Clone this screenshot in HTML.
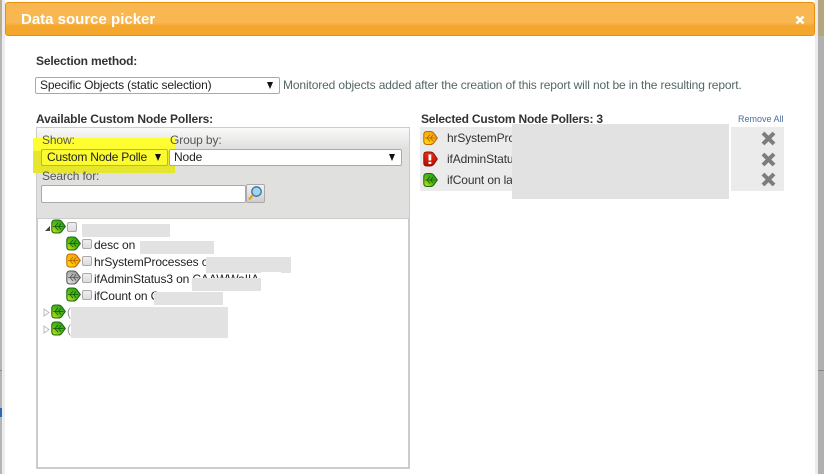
<!DOCTYPE html>
<html><head><meta charset="utf-8">
<style>
html,body{margin:0;padding:0;width:824px;height:474px;overflow:hidden;background:#fff;font-family:"Liberation Sans",sans-serif;font-size:12px;color:#333}
.a{position:absolute;white-space:nowrap}
.b{font-weight:bold;letter-spacing:-.17px}
.sel{position:absolute;box-sizing:border-box;background:#fff;border:1px solid #a9a9a9;border-radius:2px;color:#222;font-size:12px;line-height:14px;padding-left:4px;white-space:nowrap;overflow:hidden;letter-spacing:-.13px}
.arr{position:absolute;width:0;height:0;border-left:3.5px solid transparent;border-right:3.5px solid transparent;border-top:7px solid #111}
.m{position:absolute;background:#e2e2e2}
.t{position:absolute;white-space:nowrap;font-size:12px;line-height:14px;color:#222;letter-spacing:-.13px}
.c{position:absolute;box-sizing:border-box;width:10px;height:10px;background:linear-gradient(#eee,#ddd);border:1px solid #aaa;border-radius:2px}
svg{position:absolute;overflow:visible}
</style></head><body>
<svg width="0" height="0" style="position:absolute"><defs>
<linearGradient id="g" x1="1" y1="0" x2="0" y2="1"><stop offset="0" stop-color="#1f9a1c"/><stop offset=".55" stop-color="#55b814"/><stop offset="1" stop-color="#e0e810"/></linearGradient>
<linearGradient id="y" x1="1" y1="0" x2="0" y2="1"><stop offset="0" stop-color="#f59a14"/><stop offset=".55" stop-color="#fbb80c"/><stop offset="1" stop-color="#ffe800"/></linearGradient>
<linearGradient id="k" x1="1" y1="0" x2="0" y2="1"><stop offset="0" stop-color="#8f8f8f"/><stop offset=".55" stop-color="#b8b8b8"/><stop offset="1" stop-color="#eee"/></linearGradient>
<linearGradient id="r" x1="0" y1="0" x2="0" y2="1"><stop offset="0" stop-color="#e83018"/><stop offset="1" stop-color="#b80c00"/></linearGradient>
<symbol id="lg" viewBox="0 0 15 15" overflow="visible"><path d="M.8 4.500Q.8 1 4 1H7.500Q9.500 1 11 3L14.300 7.500L11 12Q9.500 14 7.500 14H4Q.8 14 .8 10.500Z" fill="url(#g)" stroke="#1d6a12" stroke-width="1.100"/><path d="M2 7.500H12.500M7 4L4 7.500L7 11M10 4.500L7.500 7.500L10 10.500" fill="none" stroke="#0f5a0c" stroke-width=".8"/></symbol>
<symbol id="ly" viewBox="0 0 15 15" overflow="visible"><path d="M.8 4.500Q.8 1 4 1H7.500Q9.500 1 11 3L14.300 7.500L11 12Q9.500 14 7.500 14H4Q.8 14 .8 10.500Z" fill="url(#y)" stroke="#c26a00" stroke-width="1.100"/><path d="M2 7.500H12.500M7 4L4 7.500L7 11M10 4.500L7.500 7.500L10 10.500" fill="none" stroke="#b06000" stroke-width=".8"/></symbol>
<symbol id="lk" viewBox="0 0 15 15" overflow="visible"><path d="M.8 4.500Q.8 1 4 1H7.500Q9.500 1 11 3L14.300 7.500L11 12Q9.500 14 7.500 14H4Q.8 14 .8 10.500Z" fill="url(#k)" stroke="#5a5a5a" stroke-width="1.100"/><path d="M2 7.500H12.500M7 4L4 7.500L7 11M10 4.500L7.500 7.500L10 10.500" fill="none" stroke="#555" stroke-width=".8"/></symbol>
</defs></svg>

<!-- page edges -->
<div class="a" style="left:0;top:0;width:2px;height:474px;background:#b4b4b4"></div>
<div class="a" style="left:2px;top:0;width:3px;height:474px;background:#ececec"></div>
<div class="a" style="left:0;top:370px;width:2px;height:1px;background:#888"></div>
<div class="a" style="left:0;top:408px;width:2px;height:9px;background:#2a6ab0"></div>
<div class="a" style="left:0;top:0;width:2px;height:36px;background:#b9ae8c"></div>
<div class="a" style="left:815px;top:0;width:3px;height:474px;background:#ececec"></div>
<div class="a" style="left:818px;top:0;width:6px;height:474px;background:#b0b0b0"></div>
<div class="a" style="left:818px;top:0;width:6px;height:36px;background:#b3a680"></div>
<div class="a" style="left:818px;top:370px;width:6px;height:1px;background:#888"></div>

<!-- title bar -->
<div class="a" style="left:5px;top:2px;width:810px;height:34px;box-sizing:border-box;border:1px solid #e8900c;border-radius:3px;background:linear-gradient(#f8b751 0,#f8b751 62%,#f5a62c 72%,#f5a62c 100%)"></div>
<div class="a" style="left:21px;top:11px;font-size:15px;line-height:18px;font-weight:bold;color:#fff">Data source picker</div>
<svg style="left:796px;top:16px" width="8" height="8" viewBox="0 0 8 8"><path d="M.5 .5L7.500 7.500M7.500 .5L.5 7.500" stroke="#fff" stroke-width="2.600"/></svg>

<!-- selection method -->
<div class="a b" style="left:36px;top:54px;line-height:15px;color:#333">Selection method:</div>
<div class="sel" style="left:35px;top:77px;width:245px;height:17px;line-height:15px">Specific Objects (static selection)</div>
<div class="arr" style="left:267px;top:82px"></div>
<div class="a" style="left:283px;top:78px;line-height:15px;color:#566;letter-spacing:-.13px">Monitored objects added after the creation of this report will not be in the resulting report.</div>

<!-- available -->
<div class="a b" style="left:36px;top:112px;line-height:15px;color:#333;letter-spacing:-.13px">Available Custom Node Pollers:</div>
<div class="a" style="left:36px;top:127px;width:374px;height:342px;box-sizing:border-box;border:2px solid #ccc;background:#fff"></div>
<div class="a" style="left:37px;top:128px;width:372px;height:91px;background:linear-gradient(#fafafa 0,#e0e0de 20px,#e0e0de 100%);border-bottom:1px solid #ccc;box-sizing:border-box"></div>
<div class="a" style="left:33px;top:138px;width:142px;height:35px;background:#e6e62e"></div>
<div class="a" style="left:33px;top:138px;width:142px;height:13px;background:linear-gradient(#ffff30,#fbfb30)"></div>
<div class="a" style="left:42px;top:133px;line-height:15px;color:#555;letter-spacing:-.13px">Show:</div>
<div class="a" style="left:170px;top:133px;line-height:15px;color:#555;letter-spacing:-.13px">Group by:</div>
<div class="sel" style="left:41px;top:149px;width:127px;height:17px;line-height:15px;background:#fbfb2e;padding-left:5px;letter-spacing:-.2px">Custom Node Polle</div>
<div class="arr" style="left:155px;top:154px"></div>
<div class="sel" style="left:169px;top:149px;width:233px;height:17px;line-height:15px">Node</div>
<div class="arr" style="left:389px;top:154px"></div>
<div class="a" style="left:42px;top:169px;line-height:15px;color:#555;letter-spacing:-.13px">Search for:</div>
<div class="a" style="left:41px;top:185px;width:205px;height:18px;box-sizing:border-box;background:#fff;border:1px solid #aaa;border-radius:2px"></div>
<div class="a" style="left:246px;top:184px;width:19px;height:19px;box-sizing:border-box;background:linear-gradient(#f4f4f4,#ccc);border:1px solid #aaa;border-radius:2px"></div>
<svg style="left:247px;top:185px" width="17" height="17" viewBox="0 0 17 17"><circle cx="9.500" cy="6.500" r="4.700" fill="#9fd4f4" stroke="#3d6f9c" stroke-width="1.300"/><path d="M6 10L2 14.500" stroke="#e0a020" stroke-width="2.200"/></svg>

<!-- tree -->
<svg style="left:44px;top:225px" width="7" height="7"><path d="M1 6H6V1Z" fill="#444"/></svg>
<svg style="left:51px;top:219px" width="15" height="15"><use href="#lg" width="15" height="15"/></svg>
<div class="c" style="left:67px;top:222px"></div>
<div class="m" style="left:82px;top:224px;width:88px;height:13px"></div>

<svg style="left:66px;top:236px" width="15" height="15"><use href="#lg" width="15" height="15"/></svg>
<div class="c" style="left:82px;top:239px"></div>
<div class="t" style="left:94px;top:238px">desc on</div>
<div class="m" style="left:140px;top:241px;width:74px;height:13px"></div>

<svg style="left:66px;top:253px" width="15" height="15"><use href="#ly" width="15" height="15"/></svg>
<div class="c" style="left:82px;top:256px"></div>
<div class="t" style="left:94px;top:255px">hrSystemProcesses o</div>
<div class="m" style="left:206px;top:257px;width:85px;height:16px"></div>

<svg style="left:66px;top:270px" width="15" height="15"><use href="#lk" width="15" height="15"/></svg>
<div class="c" style="left:82px;top:273px"></div>
<div class="t" style="left:94px;top:272px">ifAdminStatus3 on CAAWWaIIA</div>
<div class="m" style="left:192px;top:278px;width:80px;height:13px"></div>
<div class="a" style="left:261px;top:272px;width:20px;height:20px;background:#fff"></div>

<svg style="left:66px;top:287px" width="15" height="15"><use href="#lg" width="15" height="15"/></svg>
<div class="c" style="left:82px;top:290px"></div>
<div class="t" style="left:94px;top:289px">ifCount on C</div>
<div class="m" style="left:154px;top:292px;width:69px;height:13px"></div>

<svg style="left:43px;top:308px" width="7" height="9"><path d="M1 1L6 4.500L1 8Z" fill="#fff" stroke="#bbb"/></svg>
<svg style="left:51px;top:304px" width="15" height="15"><use href="#lg" width="15" height="15"/></svg>
<div class="t" style="left:67px;top:305px;color:#999">(</div>
<svg style="left:43px;top:325px" width="7" height="9"><path d="M1 1L6 4.500L1 8Z" fill="#fff" stroke="#bbb"/></svg>
<svg style="left:51px;top:321px" width="15" height="15"><use href="#lg" width="15" height="15"/></svg>
<div class="t" style="left:67px;top:322px;color:#999">(</div>
<div class="m" style="left:71px;top:307px;width:157px;height:31px"></div>

<!-- selected -->
<div class="a b" style="left:421px;top:112px;line-height:15px;color:#333;letter-spacing:-.2px">Selected Custom Node Pollers: 3</div>
<div class="a" style="left:738px;top:113px;font-size:9px;line-height:12px;color:#4a6f9c">Remove All</div>
<div class="a" style="left:420px;top:127px;width:92px;height:64px;background:#ebebeb"></div>
<svg style="left:423px;top:130px" width="15" height="16"><use href="#ly" width="15" height="16"/></svg>
<svg style="left:423px;top:151px" width="15" height="16" viewBox="0 0 15 16"><path d="M.8 4Q.8 1 3.800 1H7Q9.500 1 11 3L14.300 8L11 13Q9.500 15 7 15H3.800Q.8 15 .8 12Z" fill="url(#r)" stroke="#8a1000"/><rect x="5.500" y="3.500" width="2.800" height="6" fill="#fff"/><rect x="5.500" y="10.800" width="2.800" height="2.200" fill="#fff"/></svg>
<svg style="left:423px;top:172px" width="15" height="16"><use href="#lg" width="15" height="16"/></svg>
<div class="t" style="left:447px;top:131px;color:#333">hrSystemPro</div>
<div class="t" style="left:447px;top:152px;color:#333">ifAdminStatu</div>
<div class="t" style="left:447px;top:173px;color:#333">ifCount on la</div>
<div class="a" style="left:512px;top:124px;width:217px;height:75px;background:#e2e2e2"></div>
<div class="a" style="left:731px;top:127px;width:53px;height:64px;background:#ebebeb"></div>
<svg style="left:761px;top:131px" width="15" height="15" viewBox="0 0 15 15"><path d="M2 2L13 13M13 2L2 13" stroke="#7d7d7d" stroke-width="4"/></svg>
<svg style="left:761px;top:152px" width="15" height="15" viewBox="0 0 15 15"><path d="M2 2L13 13M13 2L2 13" stroke="#7d7d7d" stroke-width="4"/></svg>
<svg style="left:761px;top:172px" width="15" height="15" viewBox="0 0 15 15"><path d="M2 2L13 13M13 2L2 13" stroke="#7d7d7d" stroke-width="4"/></svg>
</body></html>
